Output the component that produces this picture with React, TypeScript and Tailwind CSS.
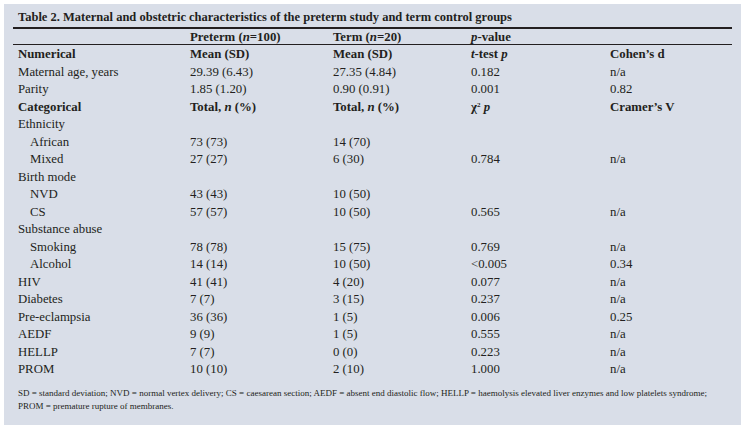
import React from 'react';

type Row = {
  label: React.ReactNode;
  cells?: React.ReactNode[];
  bold?: boolean;
  indent?: boolean;
};

const cols = 'grid grid-cols-[172px_143px_138px_139px_127px]';

const ROWS: Row[] = [
  { label: 'Numerical', bold: true, cells: ['Mean (SD)', 'Mean (SD)', <><i>t</i>-test <i>p</i></>, 'Cohen’s d'] },
  { label: 'Maternal age, years', cells: ['29.39 (6.43)', '27.35 (4.84)', '0.182', 'n/a'] },
  { label: 'Parity', cells: ['1.85 (1.20)', '0.90 (0.91)', '0.001', '0.82'] },
  {
    label: 'Categorical',
    bold: true,
    cells: [
      <>Total, <i>n</i> (%)</>,
      <>Total, <i>n</i> (%)</>,
      <>χ<sup className="text-[7px] -top-[4px]">2</sup> <i>p</i></>,
      'Cramer’s V',
    ],
  },
  { label: 'Ethnicity' },
  { label: 'African', indent: true, cells: ['73 (73)', '14 (70)', '', ''] },
  { label: 'Mixed', indent: true, cells: ['27 (27)', '6 (30)', '0.784', 'n/a'] },
  { label: 'Birth mode' },
  { label: 'NVD', indent: true, cells: ['43 (43)', '10 (50)', '', ''] },
  { label: 'CS', indent: true, cells: ['57 (57)', '10 (50)', '0.565', 'n/a'] },
  { label: 'Substance abuse' },
  { label: 'Smoking', indent: true, cells: ['78 (78)', '15 (75)', '0.769', 'n/a'] },
  { label: 'Alcohol', indent: true, cells: ['14 (14)', '10 (50)', '<0.005', '0.34'] },
  { label: 'HIV', cells: ['41 (41)', '4 (20)', '0.077', 'n/a'] },
  { label: 'Diabetes', cells: ['7 (7)', '3 (15)', '0.237', 'n/a'] },
  { label: 'Pre-eclampsia', cells: ['36 (36)', '1 (5)', '0.006', '0.25'] },
  { label: 'AEDF', cells: ['9 (9)', '1 (5)', '0.555', 'n/a'] },
  { label: 'HELLP', cells: ['7 (7)', '0 (0)', '0.223', 'n/a'] },
  { label: 'PROM', cells: ['10 (10)', '2 (10)', '1.000', 'n/a'] },
];

export default function App() {
  return (
    <div className="w-[747px] h-[433px] bg-white p-[4px]">
      <div className="w-[737px] h-[421px] bg-[#d9dee8] px-[9px] pt-[4px] text-[#231f20] font-['Liberation_Serif',serif] text-[12.8px]">
        <div className="h-[21px] border-b-2 border-[#231f20] pl-[5px] font-bold text-[12.5px] leading-[19px]">
          Table 2. Maternal and obstetric characteristics of the preterm study and term control groups
        </div>
        <div className={`${cols} h-[16px] border-b border-[#231f20] font-bold leading-[16px]`}>
          <div />
          <div className="pl-[5px] whitespace-nowrap">Preterm (<i>n</i>=100)</div>
          <div className="pl-[5px] whitespace-nowrap">Term (<i>n</i>=20)</div>
          <div className="pl-[5px]"><i>p</i>-value</div>
          <div />
        </div>
        {ROWS.map((r, i) => (
          <div key={i} className={`${cols} h-[17.5px] pt-[1px] leading-[17.5px] ${r.bold ? 'font-bold' : ''}`}>
            <div className={r.indent ? 'pl-[17px]' : 'pl-[5px]'}>{r.label}</div>
            {(r.cells ?? ['', '', '', '']).map((c, j) => (
              <div key={j} className="pl-[5px] whitespace-nowrap">{c}</div>
            ))}
          </div>
        ))}
        <div className="mt-[9px] pl-[5px] text-[9px] leading-[13px]">
          SD = standard deviation; NVD = normal vertex delivery; CS = caesarean section; AEDF = absent end diastolic flow; HELLP = haemolysis elevated liver enzymes and low platelets syndrome;
          <br />
          PROM = premature rupture of membranes.
        </div>
      </div>
    </div>
  );
}
